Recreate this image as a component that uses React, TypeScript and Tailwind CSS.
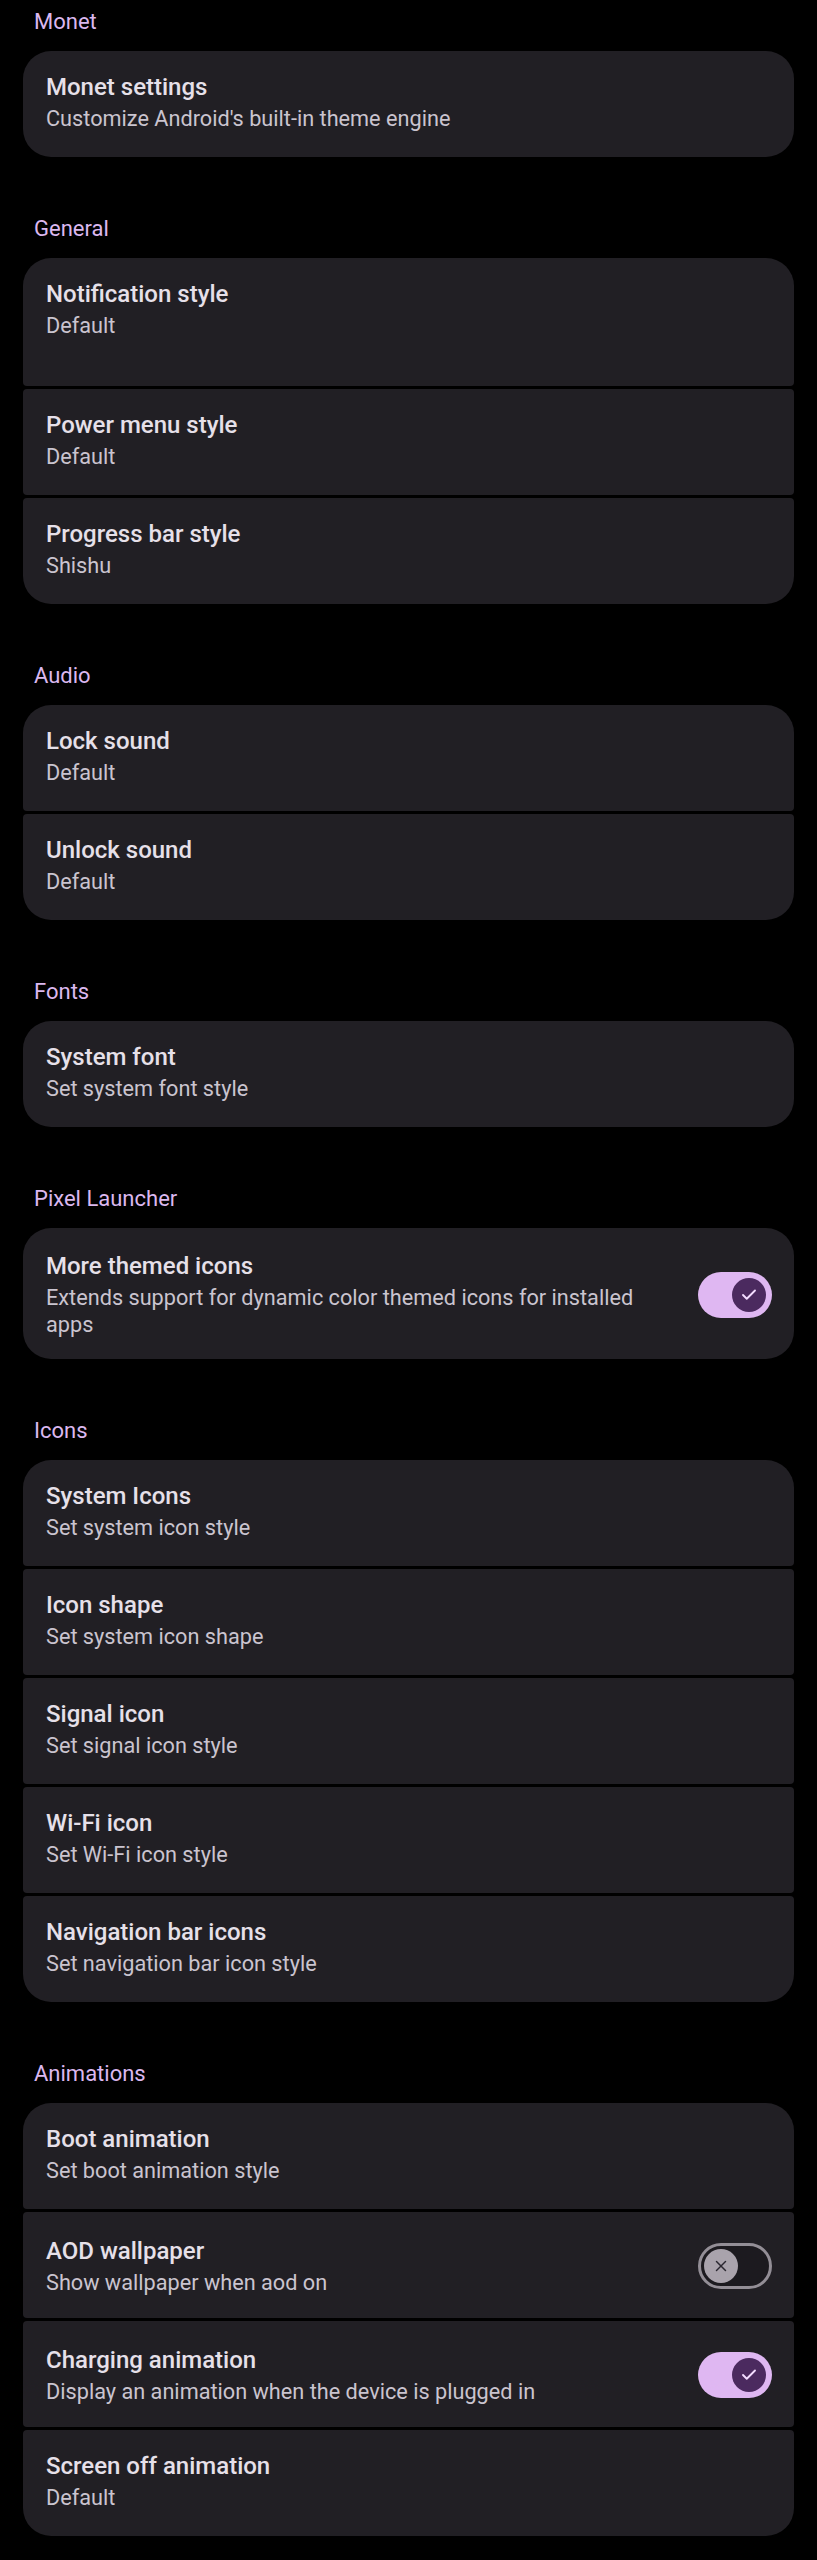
import { Check, X } from 'lucide-react';

type Item = {
  title: string;
  summary: string;
  toggle?: 'on' | 'off';
  height?: string;
};

type Section = {
  header: string;
  items: Item[];
};

const sections: Section[] = [
  {
    header: 'Monet',
    items: [{ title: 'Monet settings', summary: "Customize Android's built-in theme engine" }],
  },
  {
    header: 'General',
    items: [
      { title: 'Notification style', summary: 'Default', height: 'h-[128px]' },
      { title: 'Power menu style', summary: 'Default' },
      { title: 'Progress bar style', summary: 'Shishu' },
    ],
  },
  {
    header: 'Audio',
    items: [
      { title: 'Lock sound', summary: 'Default' },
      { title: 'Unlock sound', summary: 'Default' },
    ],
  },
  {
    header: 'Fonts',
    items: [{ title: 'System font', summary: 'Set system font style' }],
  },
  {
    header: 'Pixel Launcher',
    items: [
      {
        title: 'More themed icons',
        summary: 'Extends support for dynamic color themed icons for installed apps',
        toggle: 'on',
        height: 'h-[131px]',
      },
    ],
  },
  {
    header: 'Icons',
    items: [
      { title: 'System Icons', summary: 'Set system icon style' },
      { title: 'Icon shape', summary: 'Set system icon shape' },
      { title: 'Signal icon', summary: 'Set signal icon style' },
      { title: 'Wi-Fi icon', summary: 'Set Wi-Fi icon style' },
      { title: 'Navigation bar icons', summary: 'Set navigation bar icon style' },
    ],
  },
  {
    header: 'Animations',
    items: [
      { title: 'Boot animation', summary: 'Set boot animation style' },
      { title: 'AOD wallpaper', summary: 'Show wallpaper when aod on', toggle: 'off' },
      {
        title: 'Charging animation',
        summary: 'Display an animation when the device is plugged in',
        toggle: 'on',
      },
      { title: 'Screen off animation', summary: 'Default' },
    ],
  },
];

function Switch({ on }: { on: boolean }) {
  if (on) {
    return (
      <div className="flex h-[46px] w-[74px] shrink-0 items-center justify-end rounded-full bg-[#dfb7f2] pr-[6px]">
        <div className="flex h-[34px] w-[34px] items-center justify-center rounded-full bg-[#4b2a5f]">
          <Check size={18} strokeWidth={2.5} className="text-[#f3dcff]" />
        </div>
      </div>
    );
  }
  return (
    <div className="flex h-[46px] w-[74px] shrink-0 items-center rounded-full border-[3px] border-[#938e96] bg-[#1c1a1f] pl-[3px]">
      <div className="flex h-[34px] w-[34px] items-center justify-center rounded-full bg-[#a9a3ac]">
        <X size={18} strokeWidth={2} className="text-[#2a2730]" />
      </div>
    </div>
  );
}

function corners(i: number, n: number) {
  if (n === 1) return 'rounded-[28px]';
  if (i === 0) return 'rounded-t-[28px] rounded-b-[4px]';
  if (i === n - 1) return 'rounded-t-[4px] rounded-b-[28px]';
  return 'rounded-[4px]';
}

function Row({ item, i, n }: { item: Item; i: number; n: number }) {
  const align = item.toggle ? 'items-center pt-[2px]' : 'items-start pt-[22px]';
  return (
    <div
      className={`flex ${item.height ?? 'h-[106px]'} ${align} bg-[#211f24] pl-[23px] pr-[22px] ${corners(i, n)}`}
    >
      <div className={`flex min-w-0 flex-1 flex-col ${item.toggle ? 'mr-[44px]' : ''}`}>
        <div className="text-[24px] font-medium leading-[29px] text-[#e6e0e9]">{item.title}</div>
        <div className="mt-[3px] text-[21.7px] leading-[27px] text-[#cac4cf]">{item.summary}</div>
      </div>
      {item.toggle && <Switch on={item.toggle === 'on'} />}
    </div>
  );
}

export default function App() {
  return (
    <div
      className="min-h-[2560px] bg-black px-[23px] pt-[9px]"
      style={{ fontFamily: 'Roboto, "Noto Sans", sans-serif' }}
    >
      {sections.map((section, si) => (
        <section key={section.header} className={si === 0 ? '' : 'mt-[59px]'}>
          <h2 className="mb-[18px] pl-[11px] pt-[1px] text-[22px] font-normal leading-[23px] text-[#dbb8ef]">
            {section.header}
          </h2>
          <div className="flex flex-col gap-[3px]">
            {section.items.map((item, i) => (
              <Row key={item.title} item={item} i={i} n={section.items.length} />
            ))}
          </div>
        </section>
      ))}
    </div>
  );
}
